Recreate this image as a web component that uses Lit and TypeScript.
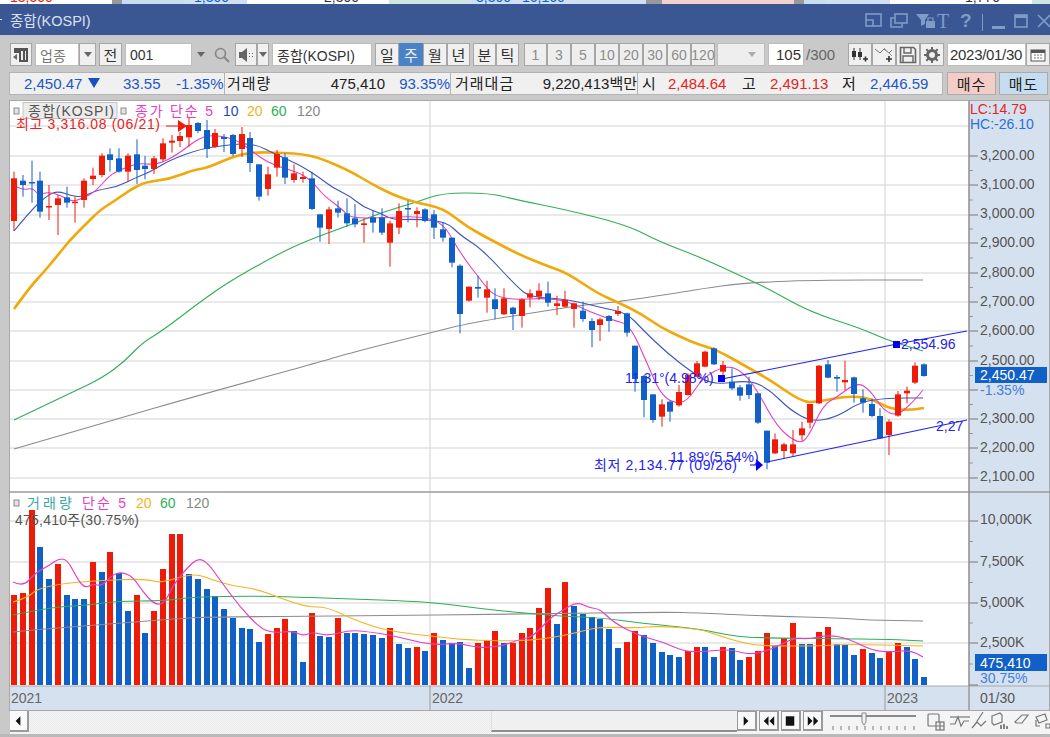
import { LitElement, html, css, svg } from 'lit';
import { customElement } from 'lit/decorators.js';

const BLUE = '#1160c8';
const RED = '#ee1b08';
const OVERLAY = '#2424ee';

type Candle = [string, number, number, number, number];

// body top, body bottom, wick top, wick bottom; y = 130 + v / 3 for the first groups
const candlesUpper: Candle[] = [
  ['r', 145, 273, 125, 303], ['b', 152, 165, 135, 200], ['b', 156, 158, 92, 218], ['b', 152, 245, 125, 263],
  ['r', 228, 232, 165, 270], ['r', 205, 225, 195, 315], ['b', 202, 218, 170, 233], ['r', 215, 218, 200, 278],
  ['r', 152, 210, 145, 233], ['r', 137, 147, 113, 165], ['r', 77, 135, 70, 142], ['b', 73, 90, 55, 125],
  ['b', 85, 125, 55, 128], ['r', 77, 125, 70, 155], ['b', 73, 120, 28, 162], ['b', 107, 117, 78, 148],
  ['r', 85, 117, 78, 132], ['r', 40, 88, 25, 95], ['r', 32, 38, 15, 68], ['r', 18, 33, 6, 51],
  ['r', -15, 22, -36, 50], ['b', -21, 3, -24, 9], ['b', 0, 57, -30, 84], ['r', 9, 51, -3, 54],
  ['b', 21, 27, 12, 66], ['b', 15, 72, 12, 78], ['r', 12, 57, -9, 81], ['b', 24, 99, 6, 126],
  ['b', 103, 200, 103, 212], ['r', 133, 177, 110, 197], ['r', 72, 113, 60, 140], ['b', 82, 143, 70, 162],
  ['r', 130, 150, 103, 158], ['r', 141, 147, 125, 158], ['b', 145, 237, 125, 240], ['b', 253, 293, 253, 335],
  ['r', 238, 297, 230, 342], ['b', 235, 248, 212, 263], ['b', 250, 280, 205, 290], ['b', 265, 283, 222, 292],
  ['r', 280, 285, 265, 338], ['b', 262, 278, 240, 308], ['b', 262, 308, 235, 315], ['r', 280, 338, 272, 410],
  ['r', 243, 293, 220, 312], ['b', 234, 237, 212, 277], ['r', 243, 252, 232, 292], ['b', 238, 273, 235, 277],
  ['b', 253, 293, 240, 327], ['b', 298, 323, 276, 335], ['b', 323, 398, 323, 412], ['b', 407, 552, 403, 610],
  ['r', 470, 512, 470, 515], ['b', 471, 476, 437, 503], ['r', 478, 503, 452, 548], ['b', 508, 537, 475, 568],
  ['r', 505, 553, 475, 555], ['b', 533, 552, 530, 600], ['r', 508, 558, 505, 593], ['r', 490, 503, 478, 532],
  ['r', 482, 500, 460, 510], ['b', 490, 518, 455, 530], ['r', 520, 528, 497, 555], ['r', 510, 530, 482, 533],
  ['r', 520, 537, 518, 593], ['b', 542, 567, 515, 575], ['b', 573, 600, 565, 652], ['r', 568, 585, 563, 633],
  ['b', 558, 573, 555, 605], ['r', 543, 552, 528, 558], ['b', 550, 608, 548, 620],
];

// y = 330 + v / 3
const candlesLower: Candle[] = [
  ['b', 47, 147, 47, 185], ['b', 138, 210, 135, 262], ['b', 193, 270, 193, 278], ['r', 223, 260, 208, 290],
  ['b', 215, 245, 212, 275], ['r', 186, 226, 165, 230], ['r', 135, 195, 130, 197], ['r', 100, 140, 93, 142],
  ['r', 65, 110, 62, 112], ['b', 55, 103, 52, 105], ['r', 105, 125, 93, 150], ['b', 155, 175, 115, 180],
  ['b', 172, 197, 165, 212], ['b', 163, 195, 140, 207], ['b', 190, 278, 190, 282], ['b', 302, 398, 302, 418],
  ['r', 328, 370, 310, 372], ['r', 343, 363, 338, 385], ['r', 343, 370, 300, 378], ['r', 295, 316, 275, 332],
  ['r', 222, 278, 222, 295], ['r', 107, 220, 105, 222], ['b', 103, 143, 90, 145], ['b', 141, 146, 135, 185],
  ['r', 150, 157, 92, 180], ['b', 142, 192, 140, 218], ['b', 205, 218, 178, 248], ['b', 222, 258, 205, 262],
  ['b', 258, 325, 235, 327], ['r', 275, 315, 268, 375], ['r', 193, 257, 183, 260], ['r', 182, 190, 170, 220],
  ['r', 107, 158, 97, 162], ['b', 103, 138, 100, 140],
];

const volumes: [string, number][] = ([
  'r595', 'r593', 'r510', 'b547', 'b579', 'r564', 'b595', 'b599', 'b599', 'r562', 'b572', 'r552', 'b573', 'b611',
  'r595', 'b633', 'r611', 'r569', 'r534', 'r534', 'b574', 'b579', 'b589', 'b596', 'b609', 'b618', 'b628', 'b629',
  'b642', 'r634', 'r628', 'r619', 'b631', 'b662', 'r613', 'b636', 'b637', 'r618', 'b633', 'b633', 'b634', 'b635',
  'b638', 'r628', 'b644', 'b648', 'r647', 'b651', 'r633', 'b640', 'b643', 'b642', 'b668', 'r643', 'r640', 'r631',
  'b643', 'r643', 'r633', 'r628', 'r608', 'r588', 'b624', 'r582', 'b606', 'b614', 'b617', 'b619', 'b629', 'b648',
  'r642', 'r631', 'b635', 'b643', 'b652', 'b655', 'b657', 'r651', 'r647', 'b647', 'b657', 'r647', 'b648', 'b660',
  'r657', 'r651', 'r633', 'b645', 'r638', 'r623', 'b644', 'b644', 'r632', 'r627', 'b644', 'b645', 'b655', 'r649',
  'b653', 'b658', 'r652', 'r643', 'b647', 'b659', 'b677',
]).map((v) => [v[0], Number(v.slice(1))] as [string, number]);

const maLines = [
  { color: '#8c8c8c', w: 1.2, pts: '14,449 124,417 189,398 327,360 350,353 433,332 470,323 550,310 583,305 617,302 683,292 700,289 743,283 813,280 923,280' },
  { color: '#2fae55', w: 1.1, pts: '14,420 73,392 102,378 124,362 142,343 162,331 200,302 227,283 267,260 303,242 350,225 383,212 417,202 442,193 490,193 517,200 563,209 627,225 660,242 700,257 743,277 767,288 810,312 860,328 887,340 923,351' },
  { color: '#f0a90a', w: 2.6, pts: '14,309 30,287 43,273 58,255 70,240 83,227 100,210 113,202 130,190 145,182 170,179 193,170 207,168 232,157 252,152 285,153 302,154 320,158 350,171 370,183 393,195 417,203 443,208 467,227 497,243 520,255 550,267 567,273 597,293 617,302 640,313 660,327 683,338 697,344 717,350 747,367 770,380 802,402 817,402 847,396 870,398 890,409 910,410 924,408' },
  { color: '#3f55bd', w: 1.1, pts: '14,231 33,208 48,195 58,191 72,196 83,197 97,190 117,187 137,177 150,172 170,160 200,149 227,145 253,143 277,155 300,165 320,178 333,188 350,196 363,207 380,213 393,220 417,219 447,222 460,235 483,250 517,287 530,297 563,299 583,303 603,308 627,313 643,330 667,353 693,373 713,385 750,380 770,390 790,410 812,422 837,417 860,402 887,398 923,398' },
  { color: '#e43fc4', w: 1.1, pts: '17,187 23,190 33,188 38,195 48,192 60,195 72,202 83,198 95,192 110,175 120,170 137,163 157,165 177,155 200,137 217,135 237,140 253,152 267,162 283,168 300,173 313,182 323,195 343,210 350,218 383,218 417,216 443,222 460,253 483,283 493,295 513,300 543,298 567,301 590,312 613,320 630,325 647,363 660,393 673,403 687,402 703,377 727,365 743,372 757,390 777,427 797,443 807,440 823,405 837,397 857,382 870,390 883,410 897,416 913,402 923,390' },
];

const volLines = [
  { color: '#8c8c8c', w: 1.2, pts: '13,632 43,629 97,625 133,622 187,618 213,617 350,616 523,614 667,612 700,613 767,616 840,618 867,620 923,621' },
  { color: '#2fae55', w: 1.2, pts: '13,615 33,611 57,607 90,605 117,601 163,601 193,597 253,596 297,597 350,599 410,601 447,604 483,609 523,613 560,616 603,618 640,623 700,629 727,635 753,638 883,639 923,641' },
  { color: '#f5b324', w: 1.2, pts: '13,602 27,598 37,589 60,584 80,582 110,580 147,579 160,583 180,577 197,574 213,580 233,586 257,589 280,598 307,607 327,607 350,618 377,628 403,633 430,636 467,640 510,641 533,640 563,636 590,629 603,627 637,628 657,626 700,629 720,636 743,643 763,646 823,646 843,644 923,646' },
  { color: '#e43fc4', w: 1.2, pts: '13,582 23,587 35,573 50,565 58,559 67,559 78,580 85,588 93,584 102,586 112,575 122,572 133,577 143,592 155,605 165,603 173,585 187,568 198,558 208,563 220,580 240,607 260,628 273,633 293,631 303,636 313,632 328,636 350,630 370,632 390,635 410,640 433,645 460,643 477,648 503,646 517,640 533,637 550,618 563,610 577,602 590,608 600,609 613,622 637,635 663,642 683,651 700,652 720,650 733,650 750,655 773,649 793,638 810,639 827,635 847,638 873,651 893,652 910,650 923,657' },
];

const priceGrid = [126, 156, 185, 215, 243, 273, 302, 331, 361, 390, 419, 448, 478];
const volGrid = [521, 562, 603, 643];
const priceLabels: [string, number][] = [
  ['3,200.00', 155], ['3,100.00', 184], ['3,000.00', 213], ['2,900.00', 242], ['2,800.00', 272], ['2,700.00', 301],
  ['2,600.00', 330], ['2,500.00', 360], ['2,300.00', 418], ['2,200.00', 447], ['2,100.00', 476],
];
const volLabels: [string, number][] = [['10,000K', 519], ['7,500K', 561], ['5,000K', 602], ['2,500K', 642]];

const candleX = (i: number) => Math.round(14 + 8.75 * i);

// rounds the corners of a hand-read polyline so the averages don't look faceted
function smoothPath(pts: string) {
  const p = pts.split(' ').map((s) => s.split(',').map(Number));
  let d = `M${p[0][0]} ${p[0][1]}`;
  for (let i = 1; i < p.length - 1; i++) {
    const mx = (p[i][0] + p[i + 1][0]) / 2;
    const my = (p[i][1] + p[i + 1][1]) / 2;
    d += ` Q${p[i][0]} ${p[i][1]} ${mx} ${my}`;
  }
  const last = p[p.length - 1];
  return `${d} L${last[0]} ${last[1]}`;
}

const topCells = [
  [112, '#fff', '13,500', RED], [6, '#999', '', ''], [62, '#c9dcf0', '', ''], [63, '#cfe0f2', '1,300', BLUE],
  [67, '#fff', '', ''], [75, '#fff', '2,300', '#333'], [77, '#cfe6e0', '', ''], [46, '#cfe0f2', '3,300', BLUE],
  [134, '#cfe0f2', '16,160', BLUE], [16, '#999', '', ''], [67, '#f6d0cb', '', ''], [65, '#f6d0cb', '', ''],
  [7, '#999', '', ''], [21, '#c9dcf0', '', ''], [65, '#cfe0f2', '', ''], [65, '#fff', '', ''], [77, '#fff', '1,770', '#333'],
  [25, '#cfe6e0', '', ''],
] as [number, string, string, string][];

const rangeButtons = ['1', '3', '5', '10', '20', '30', '60', '120'];

@customElement('app-root')
export class AppRoot extends LitElement {
  static styles = css`
    :host {
      display: block;
      width: 1050px;
      height: 737px;
      overflow: hidden;
      background: #b9b9b9;
      font-family: 'Liberation Sans', 'Noto Sans CJK KR', sans-serif;
      font-size: 14px;
      color: #222;
    }
    .body {
      background: #c9c9c9;
      height: 699px;
      overflow: hidden;
    }
    .strip {
      display: flex;
      height: 4px;
      overflow: hidden;
      background: #fff;
    }
    .strip-cell {
      flex: none;
      height: 4px;
      overflow: hidden;
      font-size: 14px;
      line-height: 14px;
      padding-left: 10px;
      box-sizing: border-box;
    }
    .strip-cell span {
      display: block;
      margin-top: -10px;
    }
    .title {
      display: flex;
      align-items: center;
      height: 31px;
      background: #3a5794;
      color: #d9e0ee;
      font-size: 14.500px;
    }
    .title::before {
      content: '';
      width: 2px;
      height: 1px;
      margin-right: 8px;
      background: #d9e0ee;
    }
    .title-name {
      flex: 1;
    }
    .win-icons {
      display: flex;
      align-items: center;
    }
    .win-icons svg {
      display: block;
    }
    .toolbar {
      display: flex;
      align-items: stretch;
      height: 23px;
      margin: 8px 0 0 10px;
      font-size: 14px;
    }
    .btn {
      flex: none;
      display: flex;
      align-items: center;
      justify-content: center;
      box-sizing: border-box;
      width: 24px;
      background: #f0f0f0;
      border: 1px solid #a6a6a6;
      color: #333;
      font-size: 15px;
    }
    .btn.on {
      background: #4b82c6;
      color: #e8f0fa;
      border-color: #4b82c6;
    }
    .btn.faded {
      color: #8c8c8c;
      background: #eeeeee;
      font-size: 14px;
    }
    .field {
      flex: none;
      display: flex;
      align-items: center;
      box-sizing: border-box;
      background: #fff;
      padding-left: 4px;
      border: 1px solid #bdbdbd;
      color: #333;
    }
    .plain {
      flex: none;
      background: transparent;
      border: none;
    }
    .caret {
      width: 0;
      height: 0;
      border-left: 4px solid transparent;
      border-right: 4px solid transparent;
      border-top: 5px solid #666;
    }
    .caret.light {
      border-top-color: #aaa;
    }
    .sp5 { margin-left: 5px; }
    .sp3 { margin-left: 3px; }
    .sp2 { margin-left: 2px; }
    .w22 { width: 22px; }
    .w23 { width: 23px; }
    .w17 { width: 17px; }
    .w12 { width: 12px; }
    .w44 { width: 44px; color: #777; }
    .w67 { width: 67px; }
    .w100 { width: 100px; }
    .w48 { width: 48px; background: #eee; justify-content: flex-end; padding-right: 8px; }
    .w36 { width: 36px; justify-content: flex-end; padding-right: 2px; font-size: 15px; }
    .w32 { width: 44px; color: #666; padding-left: 2px; font-size: 15px; align-self: center; }
    .w79 { width: 79px; padding-left: 2px; font-size: 15px; letter-spacing: -0.3px; }
    .info {
      display: flex;
      height: 23px;
      margin: 6px 0 0 9px;
    }
    .quote {
      flex: none;
      width: 934px;
      box-sizing: border-box;
      background: #f0f0f0;
      border: 1px solid #b4b4b4;
      display: grid;
      grid-template-columns: 99px 53px 48px 3px 73px 85px 65px 5px 75px 107px 5px 26px 74px 28px 72px 28px 70px;
      padding-left: 14px;
      align-items: center;
      font-size: 15px;
      line-height: 21px;
    }
    .quote > span {
      white-space: nowrap;
    }
    .c-blue { color: #2257c8; }
    .c-red { color: #e8231d; }
    .c-dark { color: #222; }
    .right { text-align: right; }
    .rule {
      align-self: stretch;
      border-left: 1px solid #b4b4b4;
      width: 0;
    }
    .label {
      letter-spacing: 1px;
    }
    .trade {
      flex: none;
      width: 49px;
      margin-left: 4px;
      display: flex;
      align-items: center;
      justify-content: center;
      box-sizing: border-box;
      border: 1px solid #aaa;
      font-size: 15px;
      letter-spacing: 1px;
    }
    .buy { background: #f5cdc8; }
    .sell { background: #c5dcf1; margin-left: 3px; }
    .chart {
      display: block;
      margin: 5px 0 0 9px;
      width: 1041px;
      height: 611px;
    }
    .chart text {
      font-family: 'Liberation Sans', 'Noto Sans CJK KR', sans-serif;
      font-size: 14px;
    }
    .bottom {
      display: flex;
      height: 23px;
      margin-left: 10px;
      align-items: flex-start;
      background: #f4f4f4;
    }
    .sb-arrow {
      flex: none;
      width: 19px;
      height: 21px;
      display: flex;
      align-items: center;
      justify-content: center;
      background: #fafafa;
      border-right: 2px solid #9a9a9a;
      border-bottom: 2px solid #9a9a9a;
      box-sizing: border-box;
    }
    .track {
      flex: none;
      width: 462px;
      height: 23px;
      background: repeating-conic-gradient(#f7f7f7 0 25%, #e8e8e8 0 50%) 0 0 / 2px 2px;
    }
    .thumb {
      flex: none;
      width: 246px;
      height: 21px;
      background: #f0f0f0;
      border-bottom: 2px solid #8e8e8e;
      border-left: 1px solid #ddd;
      box-sizing: border-box;
    }
    .play {
      flex: none;
      width: 20px;
      height: 20px;
      margin-right: 2px;
      background: #f8f8f8;
      border: 1px solid #9a9a9a;
      border-width: 1px 2px 2px 1px;
      box-sizing: border-box;
      display: flex;
      align-items: center;
      justify-content: center;
    }
    .slider {
      flex: none;
      display: block;
      margin-left: 5px;
    }
    .tools {
      flex: none;
      display: block;
    }
  `;

  private lines(list: { color: string; w: number; pts: string }[]) {
    return list.map(
      (l) => svg`<path d=${smoothPath(l.pts)} fill="none" stroke=${l.color} stroke-width=${l.w} stroke-linejoin="round"></path>`
    );
  }

  private candles() {
    const draw = (c: Candle, i: number, base: number) => {
      const x = candleX(i);
      const col = c[0] === 'r' ? RED : BLUE;
      const top = base + c[1] / 3;
      const bot = base + c[2] / 3;
      return svg`<rect x=${x - 0.5} y=${base + c[3] / 3} width="1" height=${(c[4] - c[3]) / 3} fill=${col}></rect>
        <rect x=${x - 3} y=${top} width="6" height=${Math.max(bot - top, 1.5)} fill=${col}></rect>`;
    };
    return [
      ...candlesUpper.map((c, i) => draw(c, i, 130)),
      ...candlesLower.map((c, i) => draw(c, i + 71, 330)),
    ];
  }

  private axisTicks(from: number, to: number, major: number[]) {
    const out = [];
    for (const y of major) out.push(svg`<line x1="969" x2="978" y1=${y} y2=${y} stroke="#777"></line>`);
    for (let i = 0; i < major.length - 1; i++) {
      const y = (major[i] + major[i + 1]) / 2;
      out.push(svg`<line x1="969" x2="973" y1=${y} y2=${y} stroke="#999"></line>`);
    }
    out.push(svg`<line x1="969" x2="969" y1=${from} y2=${to} stroke="#8e8e8e" stroke-width="1.5"></line>`);
    return out;
  }

  private chart() {
    return html`<svg class="chart" viewBox="9 100 1041 611" xmlns="http://www.w3.org/2000/svg">
      <rect x="9" y="100" width="1041" height="611" fill="#fff"></rect>
      <rect x="969" y="100" width="81" height="611" fill="#d6e1ef"></rect>
      <rect x="9" y="686" width="1041" height="24" fill="#d6e1ef"></rect>
      <rect x="9.5" y="100.5" width="1040" height="610" fill="none" stroke="#a8a8a8"></rect>
      ${priceGrid.map((y) => svg`<line x1="10" x2="969" y1=${y} y2=${y} stroke="#e2e2e2" stroke-width="1.5"></line>`)}
      ${volGrid.map((y) => svg`<line x1="10" x2="969" y1=${y} y2=${y} stroke="#e2e2e2" stroke-width="1.5"></line>`)}
      <line x1="430" x2="430" y1="101" y2="686" stroke="#d8d8d8" stroke-width="1.2"></line>
      <line x1="885" x2="885" y1="101" y2="686" stroke="#d8d8d8" stroke-width="1.2"></line>
      <line x1="9" x2="1050" y1="492" y2="492" stroke="#9a9a9a" stroke-width="1.5"></line>
      <line x1="9" x2="1050" y1="686" y2="686" stroke="#a8a8a8"></line>
      <line x1="430" x2="430" y1="686" y2="710" stroke="#9a9a9a"></line>
      <line x1="885" x2="885" y1="686" y2="710" stroke="#9a9a9a"></line>
      <line x1="969" x2="969" y1="686" y2="710" stroke="#9a9a9a" stroke-width="1.5"></line>

      ${this.lines(maLines)}
      ${this.candles()}

      ${volumes.map(([c, top], i) => {
        const x = candleX(i);
        return svg`<rect x=${x - 3} y=${top} width="6" height=${685 - top} fill=${c === 'r' ? RED : BLUE}></rect>`;
      })}
      ${this.lines(volLines)}

      <!-- trend channel -->
      <polyline points="722,379 897,344 967,331" fill="none" stroke="#2222f0" stroke-width="1.2"></polyline>
      <polyline points="767,462 967,420" fill="none" stroke="#2222f0" stroke-width="1.2"></polyline>
      <rect x="718" y="375" width="7" height="7" fill="#0000ee"></rect>
      <rect x="893" y="341" width="7" height="7" fill="#0000ee"></rect>
      <polygon points="756,459 763,465 756,471" fill="#0000ee"></polygon>
      <line x1="750" x2="758" y1="465" y2="465" stroke="#0000ee"></line>
      <text x="625" y="383" fill=${OVERLAY}>11.31°(4.98%)</text>
      <text x="670" y="462" fill=${OVERLAY}>11.89°(5.54%)</text>
      <text x="594" y="470" fill=${OVERLAY} textLength="143">최저 2,134.77 (09/26)</text>
      <text x="901" y="349" fill=${OVERLAY}>2,554.96</text>
      <text x="936" y="431" fill=${OVERLAY}>2,27</text>

      <!-- price legend -->
      <rect x="14" y="108" width="5" height="6" fill="#e4e4e4" stroke="#8a8a8a"></rect>
      <rect x="23" y="102.5" width="94" height="16" fill="#ececec" stroke="#c4c4c4"></rect>
      <rect x="121" y="108" width="5" height="6" fill="#e4e4e4" stroke="#8a8a8a"></rect>
      <text x="28" y="116" fill="#555" textLength="86">종합(KOSPI)</text>
      <text x="135" y="116" fill="#e43fc4" textLength="78">종가 단순 5</text>
      <text x="223" y="116" fill="#2a44b8">10</text>
      <text x="247" y="116" fill="#f5b324">20</text>
      <text x="271" y="116" fill="#2fae55">60</text>
      <text x="297" y="116" fill="#888">120</text>
      <text x="16" y="129" fill="#e8231d" textLength="144">최고 3,316.08 (06/21)</text>
      <line x1="166" x2="184" y1="126" y2="126" stroke="#ee1b08"></line>
      <polygon points="178,120 187,126 178,132" fill="#ee1b08"></polygon>

      <!-- price axis -->
      ${this.axisTicks(101, 492, [156, 185, 215, 243, 273, 302, 331, 361, 390, 419, 448, 478])}
      ${priceLabels.map(([t, y]) => svg`<text x="980" y=${y + 5} fill="#555">${t}</text>`)}
      <text x="970" y="114" fill="#e8231d">LC:14.79</text>
      <text x="970" y="129" fill="#2a6fd8">HC:-26.10</text>
      <rect x="975" y="367" width="72" height="16" fill=${BLUE}></rect>
      <text x="980" y="380" fill="#fff">2,450.47</text>
      <text x="980" y="395" fill="#3f7fdc">-1.35%</text>

      <!-- volume legend -->
      <rect x="14" y="500" width="5" height="6" fill="#e4e4e4" stroke="#8a8a8a"></rect>
      <text x="27" y="508" fill="#3aa6a6" textLength="45">거래량</text>
      <text x="82" y="508" fill="#e43fc4" textLength="44">단순 5</text>
      <text x="136" y="508" fill="#f5b324">20</text>
      <text x="160" y="508" fill="#2fae55">60</text>
      <text x="186" y="508" fill="#888">120</text>
      <text x="15" y="525" fill="#555" textLength="124">475,410주(30.75%)</text>

      <!-- volume axis -->
      ${this.axisTicks(492, 686, [521, 562, 603, 643, 685])}
      ${volLabels.map(([t, y]) => svg`<text x="980" y=${y + 5} fill="#555">${t}</text>`)}
      <rect x="975" y="654" width="72" height="17" fill=${BLUE}></rect>
      <text x="980" y="668" fill="#fff">475,410</text>
      <text x="980" y="683" fill="#3f7fdc">30.75%</text>

      <!-- date axis -->
      <text x="11" y="703" fill="#666">2021</text>
      <text x="432" y="703" fill="#666">2022</text>
      <text x="887" y="703" fill="#666">2023</text>
      <text x="980" y="703" fill="#555">01/30</text>
    </svg>`;
  }

  private winIcons() {
    const c = '#7f9bc8';
    return html`<svg class="win-icons" width="190" height="31" viewBox="860 4 190 31" xmlns="http://www.w3.org/2000/svg">
      <g fill="none" stroke=${c} stroke-width="1.6">
        <rect x="866" y="14" width="15" height="12"></rect>
        <path d="M866 20h7v6"></path>
        <rect x="895" y="14" width="12" height="9"></rect>
        <path d="M895 18h-4v9h11v-4"></path>
      </g>
      <path d="M916 14h13l-4 6v4l-4 2v-6z" fill=${c}></path>
      <rect x="926" y="21" width="9" height="7" fill=${c}></rect>
      <path d="M928 21v-3h5v3" fill="none" stroke=${c} stroke-width="1.2"></path>
      <text x="937" y="28" font-family="'Liberation Serif', serif" font-size="20" fill=${c}>T</text>
      <text x="960" y="27" font-family="'Liberation Sans', sans-serif" font-size="19" font-weight="700" fill=${c}>?</text>
      <line x1="982.5" x2="982.5" y1="14" y2="31" stroke=${c}></line>
      <rect x="992" y="26" width="13" height="3" fill=${c}></rect>
      <rect x="1015" y="15" width="12" height="12" fill="none" stroke=${c} stroke-width="1.6"></rect>
      <rect x="1015" y="15" width="12" height="3" fill=${c}></rect>
      <path d="M1038 15l12 12M1050 15l-12 12" stroke=${c} stroke-width="1.6"></path>
    </svg>`;
  }

  private playIcon(kind: string) {
    const paths: Record<string, string> = {
      next: 'M6 4l5 5-5 5z',
      rew: 'M9 4l-5 5 5 5zM15 4l-5 5 5 5z',
      stop: 'M4 4h9v10H4z',
      ff: 'M4 4l5 5-5 5zM10 4l5 5-5 5z',
      prev: 'M11 4l-5 5 5 5z',
    };
    return html`<svg width="18" height="18" viewBox="0 0 18 18"><path d=${paths[kind]} fill="#111"></path></svg>`;
  }

  render() {
    return html`
      <div class="strip">
        ${topCells.map(
          ([w, bg, t, col]) =>
            html`<div class="strip-cell" style="width:${w}px;background:${bg};color:${col}"><span>${t}</span></div>`
        )}
      </div>
      <div class="title">
        <span class="title-name">종합(KOSPI)</span>
        ${this.winIcons()}
      </div>
      <div class="body">
        <div class="toolbar">
          <div class="btn w22">
            <svg width="18" height="16" viewBox="0 0 18 16">
              <path d="M2 1h14v14H7V6H2z" fill="#555"></path>
              <path d="M9 4h2v9H9zM13 4h1v9h-1z" fill="#eee"></path>
              <path d="M1 10l4-3v6z" fill="#666"></path>
            </svg>
          </div>
          <div class="field w44 sp3">업종</div>
          <div class="btn w17"><span class="caret"></span></div>
          <div class="btn w23 sp3">전</div>
          <div class="field w67 sp3">001</div>
          <div class="btn w17 plain"><span class="caret"></span></div>
          <div class="btn w22 plain sp2">
            <svg width="18" height="18" viewBox="0 0 18 18">
              <circle cx="7.5" cy="7.5" r="5" fill="none" stroke="#888" stroke-width="1.6"></circle>
              <path d="M11 11l5 5" stroke="#888" stroke-width="2"></path>
            </svg>
          </div>
          <div class="btn w22 sp2">
            <svg width="18" height="16" viewBox="0 0 18 16">
              <path d="M2 5h3l5-4v14l-5-4H2z" fill="#666"></path>
              <path d="M12 6h1v1h-1zM15 6h1v1h-1zM12 9h1v1h-1zM15 9h1v1h-1z" fill="#666"></path>
            </svg>
          </div>
          <div class="btn w12"><span class="caret"></span></div>
          <div class="field w100 sp3">종합(KOSPI)</div>
          <div class="btn sp3">일</div>
          <div class="btn on">주</div>
          <div class="btn">월</div>
          <div class="btn w23">년</div>
          <div class="btn sp3 w23">분</div>
          <div class="btn w23">틱</div>
          <div class="btn faded w23 sp5">1</div>
          ${rangeButtons.slice(1).map((b) => html`<div class="btn faded">${b}</div>`)}
          <div class="field w48 sp2"><span class="caret light"></span></div>
          <div class="field w36 sp3">105</div>
          <div class="w32">/300</div>
          <div class="btn">
            <svg width="20" height="18" viewBox="0 0 20 18">
              <path d="M4 2v12M10 2v12" stroke="#333"></path>
              <path d="M2 5h4v6H2zM8 6h4v5H8z" fill="#333"></path>
              <path d="M13 13h5M15.500 10.500v5" stroke="#333" stroke-width="1.6"></path>
            </svg>
          </div>
          <div class="btn">
            <svg width="20" height="18" viewBox="0 0 20 18">
              <path d="M1 3l5 4 4-4 5 4 3-3" fill="none" stroke="#777"></path>
              <path d="M10 2l8 8" stroke="#999"></path>
              <path d="M12 13h6M15 10v6" stroke="#333" stroke-width="1.6"></path>
            </svg>
          </div>
          <div class="btn">
            <svg width="18" height="18" viewBox="0 0 18 18">
              <path d="M1.500 1.500h13l2 2v13h-15z" fill="none" stroke="#666" stroke-width="1.6"></path>
              <path d="M5 2v5h7V2M4 16v-6h10v6" fill="none" stroke="#666" stroke-width="1.4"></path>
            </svg>
          </div>
          <div class="btn">
            <svg width="18" height="18" viewBox="0 0 18 18">
              <circle cx="9" cy="9" r="4.500" fill="none" stroke="#666" stroke-width="3"></circle>
              <path d="M9 1v3M9 14v3M1 9h3M14 9h3M3.300 3.300l2 2M12.700 12.700l2 2M14.700 3.300l-2 2M5.300 12.700l-2 2" stroke="#666" stroke-width="2"></path>
            </svg>
          </div>
          <div class="field w79 sp3">2023/01/30</div>
          <div class="btn">
            <svg width="16" height="14" viewBox="0 0 16 14">
              <rect x="1" y="2" width="14" height="11" fill="#fff" stroke="#555"></rect>
              <rect x="1" y="2" width="14" height="3" fill="#555"></rect>
              <path d="M4 7h2M7 7h2M10 7h2M4 10h2M7 10h2M10 10h2" stroke="#777"></path>
            </svg>
          </div>
        </div>
        <div class="info">
          <div class="quote">
            <span class="c-blue">2,450.47 <svg width="14" height="12" viewBox="0 0 14 12"><path d="M1 1h12L7 11z" fill="#1a4fc0"></path></svg></span>
            <span class="c-blue">33.55</span>
            <span class="c-blue">-1.35%</span>
            <span class="rule"></span>
            <span class="label">거래량</span>
            <span class="right">475,410</span>
            <span class="right c-blue">93.35%</span>
            <span class="rule"></span>
            <span class="label">거래대금</span>
            <span class="right">9,220,413백만</span>
            <span class="rule"></span>
            <span>시</span>
            <span class="c-red">2,484.64</span>
            <span>고</span>
            <span class="c-red">2,491.13</span>
            <span>저</span>
            <span class="c-blue">2,446.59</span>
          </div>
          <div class="trade buy">매수</div>
          <div class="trade sell">매도</div>
        </div>
        ${this.chart()}
        <div class="bottom">
          <div class="sb-arrow">${this.playIcon('prev')}</div>
          <div class="track"></div>
          <div class="thumb"></div>
          <div class="play">${this.playIcon('next')}</div>
          <div class="play">${this.playIcon('rew')}</div>
          <div class="play">${this.playIcon('stop')}</div>
          <div class="play">${this.playIcon('ff')}</div>
          <svg class="slider" width="92" height="21" viewBox="0 0 92 21">
            <path d="M0 5h86" stroke="#8a8a8a" stroke-width="2"></path>
            <path d="M32 2h4v9l-2 3-2-3z" fill="#f2f2f2" stroke="#888"></path>
            <path d="M3 15v4M11 15v4M19 15v4M27 15v4M35 15v4M43 15v4M51 15v4M59 15v4M67 15v4M75 15v4M84 15v4" stroke="#777"></path>
          </svg>
          <svg class="tools" width="130" height="21" viewBox="920 711 130 21">
            <g fill="none" stroke="#777" stroke-width="1.2">
              <rect x="926" y="714" width="11" height="12" rx="1"></rect>
              <rect x="934" y="722" width="8" height="8" fill="#eee"></rect>
              <path d="M938 722v8M934 726h8"></path>
              <path d="M948 724h5l3-7 3 9 3-5h5"></path>
              <path d="M948 717h20"></path>
              <path d="M970 728l5-6 4 4 5-5M981 712l-9 14"></path>
              <path d="M990 716l8-3 2 2v7l-8 3-2-2z"></path>
              <path d="M1013 722l7-7h6l-6 8h-6z"></path>
              <path d="M1034 717l9-3 2 6-8 3zM1034 720v6h4M1044 724h4v4h-4z"></path>
            </g>
            <path d="M999 729v-4M1002 729v-5M1005 729v-3" stroke="#555" stroke-width="1.400"></path>
          </svg>
        </div>
      </div>
    `;
  }
}
